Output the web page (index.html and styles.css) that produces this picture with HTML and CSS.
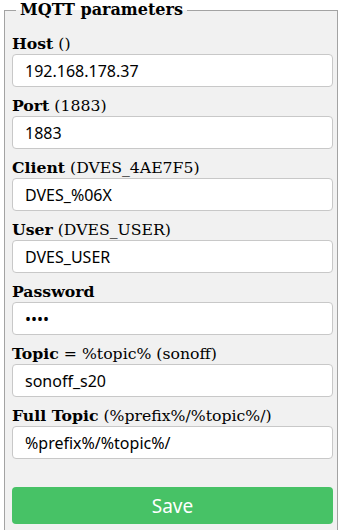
FILE: index.html
```html
<!DOCTYPE html>
<html lang="en">

<head>
    <meta charset="UTF-8">
    <title>MQTT parameters</title>
    <link rel="stylesheet" href="styles.css">
</head>
<body>

  <fieldset class="panel">
    <legend>MQTT parameters</legend>
    <form class="form">
      <div class="field">
        <label><b>Host</b> ()</label>
        <input type="text" value="192.168.178.37">
      </div>
      <div class="field">
        <label><b>Port</b> (1883)</label>
        <input type="text" value="1883">
      </div>
      <div class="field">
        <label><b>Client</b> (DVES_4AE7F5)</label>
        <input type="text" value="DVES_%06X">
      </div>
      <div class="field">
        <label><b>User</b> (DVES_USER)</label>
        <input type="text" value="DVES_USER">
      </div>
      <div class="field">
        <label><b>Password</b></label>
        <input type="password" value="****">
      </div>
      <div class="field">
        <label><b>Topic</b> = %topic% (sonoff)</label>
        <input type="text" value="sonoff_s20">
      </div>
      <div class="field">
        <label><b>Full Topic</b> (%prefix%/%topic%/)</label>
        <input type="text" value="%prefix%/%topic%/">
      </div>
      <button type="button" class="save">Save</button>
    </form>
  </fieldset>

</body>
</html>
```

FILE: styles.css
```css
body {
    margin: 0;
    background-color: #fff;
    font-family: "DejaVu Serif", serif;
    color: #000;
}

.panel {
    margin: 0 1px 0 4px;
    padding: 0 4px 20px 7px;
    border: 1px solid #a3a3a3;
    background-color: #f1f1f1;
}

.panel legend {
    margin-left: 4px;
    padding: 0 4px;
    font-size: 16px;
    font-weight: bold;
    line-height: 20px;
}

.form {
    display: flex;
    flex-direction: column;
    gap: 10px;
    padding-top: 15px;
}

.field {
    display: flex;
    flex-direction: column;
}

.field label {
    font-size: 15.7px;
    line-height: 18px;
    margin-bottom: 1px;
}

.field input {
    box-sizing: border-box;
    width: 100%;
    height: 33px;
    padding: 0 12px;
    border: 1px solid #c8c8c8;
    border-radius: 4px;
    background-color: #fff;
    font-family: "Noto Sans", sans-serif;
    font-size: 16px;
    color: #000;
}

.save {
    margin-top: 18px;
    width: 100%;
    height: 37px;
    border: none;
    border-radius: 4px;
    background-color: #47c266;
    color: #fff;
    font-family: "Noto Sans", sans-serif;
    font-size: 19px;
    cursor: pointer;
}
```
